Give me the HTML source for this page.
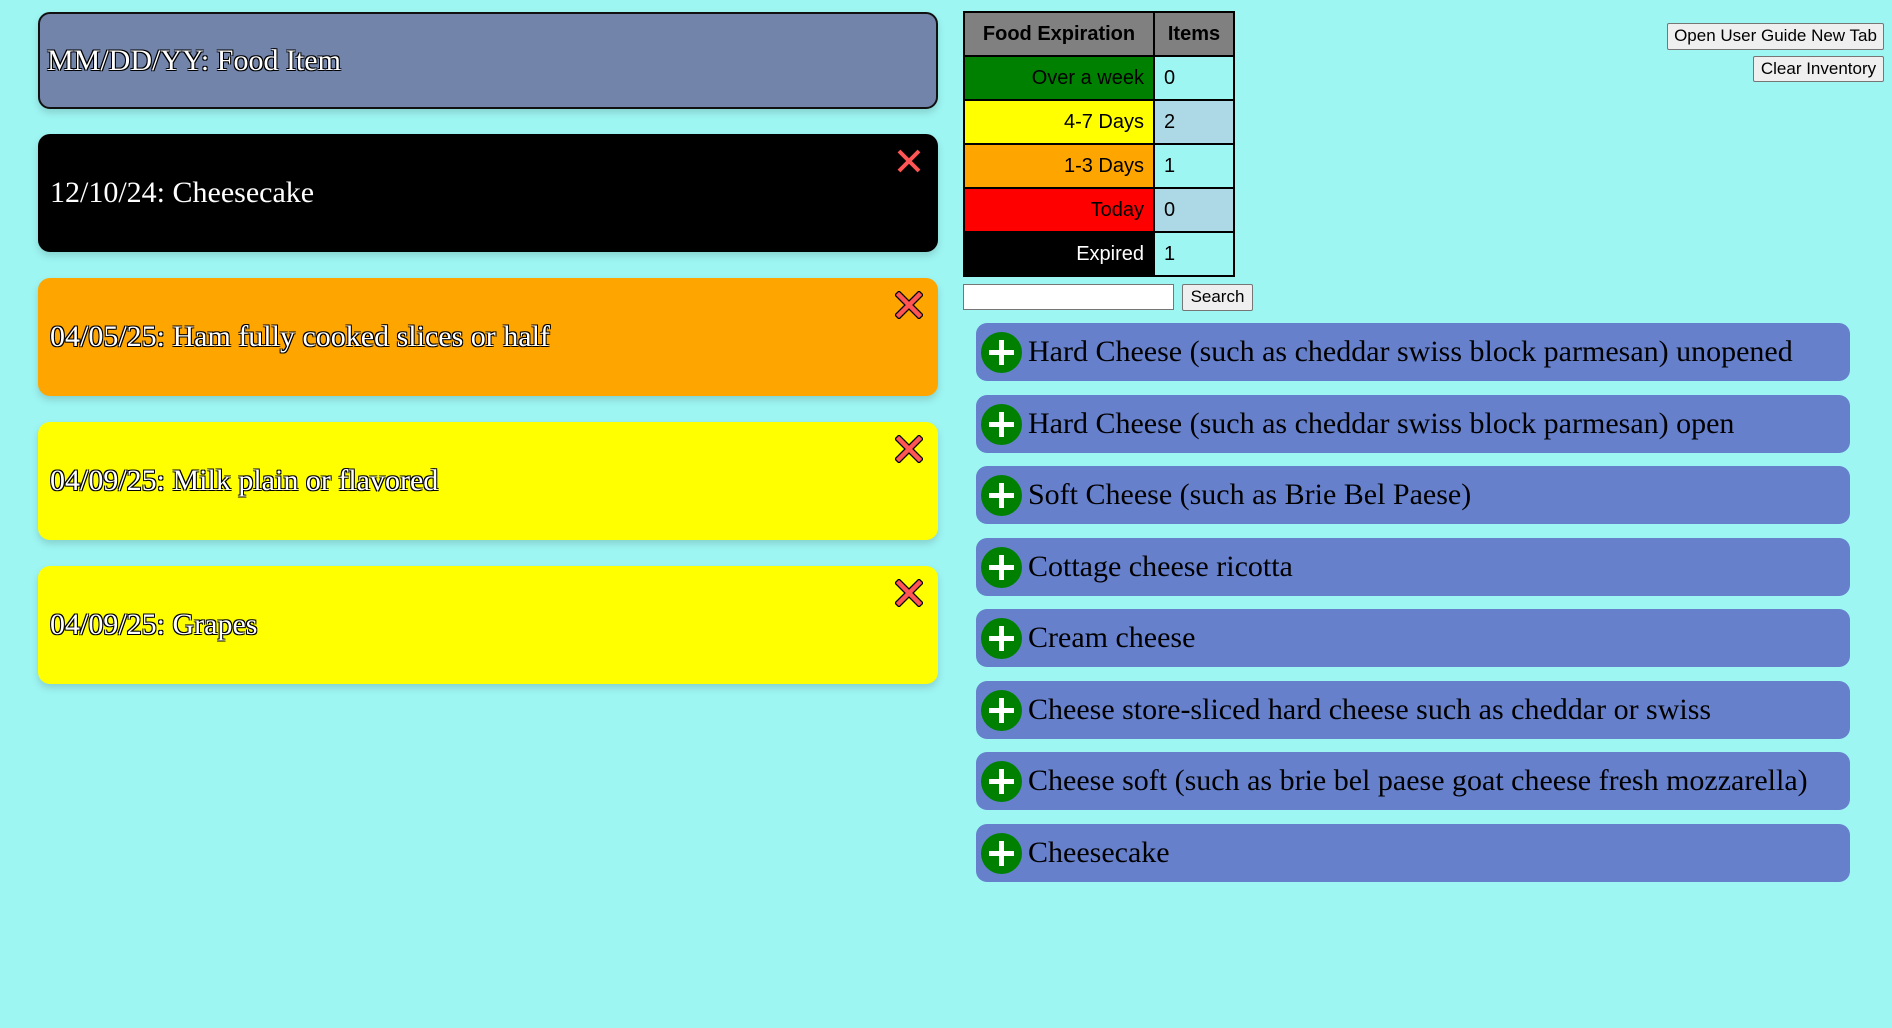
<!DOCTYPE html>
<html><head><meta charset="utf-8"><style>
body{margin:0;width:1892px;height:1028px;background:#9ef6f3;position:relative;overflow:hidden;font-family:"Liberation Serif",serif}
.card{position:absolute;left:38px;width:900px;height:118px;border-radius:12px;box-shadow:0 4px 8px rgba(0,0,0,.15);font-size:30px;color:#fff;display:flex;align-items:center;box-sizing:border-box;padding-left:12px}
.out{text-shadow:-1px -1px 0 #000,1px -1px 0 #000,-1px 1px 0 #000,1px 1px 0 #000}
.x{position:absolute;left:857px;top:13px;width:28px;height:28px}
table{position:absolute;left:963px;top:11px;border-collapse:collapse;font-family:"Liberation Sans",sans-serif;font-size:20px}
td,th{border:2px solid #000;height:42px;padding:0 9px}
th{background:#808080;font-weight:bold}
td.l{text-align:right;width:170px}
td.r{width:60px}
.btn{position:absolute;background:#efefef;border:1px solid #767676;border-radius:2px;font-family:"Liberation Sans",sans-serif;font-size:17px;color:#000;box-sizing:border-box;text-align:center;line-height:24px}
.it{position:absolute;left:976px;width:874px;height:58px;background:#6680cc;border-radius:11px;display:flex;align-items:center;font-size:30px;color:#000}
.pl{width:41px;height:41px;border-radius:50%;background:#008000;margin:0 6px 0 5px;position:relative;flex:none}
.pl:before{content:"";position:absolute;left:8px;top:18px;width:25px;height:5px;background:#fff}
.pl:after{content:"";position:absolute;left:18px;top:8px;width:5px;height:25px;background:#fff}
</style></head><body>
<svg width="0" height="0" style="position:absolute"><defs><g id="xx"><path d="M4 4L24 24M24 4L4 24" stroke="#000" stroke-width="7" stroke-linecap="square"/><path d="M4 4L24 24M24 4L4 24" stroke="#f55" stroke-width="4.5" stroke-linecap="square"/></g></defs></svg>
<div class="card out" style="top:12px;height:97px;background:#7384ab;border:2px solid #111;padding-left:7px">MM/DD/YY: Food Item</div>
<div class="card" style="top:134px;background:#000">12/10/24: Cheesecake<svg class="x" viewBox="0 0 28 28"><path d="M4 4L24 24M24 4L4 24" stroke="#f55" stroke-width="4"/></svg></div>
<div class="card out" style="top:278px;background:#ffa500">04/05/25: Ham fully cooked slices or half<svg class="x" viewBox="0 0 28 28"><use href="#xx"/></svg></div>
<div class="card out" style="top:422px;background:#ff0">04/09/25: Milk plain or flavored<svg class="x" viewBox="0 0 28 28"><use href="#xx"/></svg></div>
<div class="card out" style="top:566px;background:#ff0">04/09/25: Grapes<svg class="x" viewBox="0 0 28 28"><use href="#xx"/></svg></div>
<table>
<tr><th>Food Expiration</th><th>Items</th></tr>
<tr><td class="l" style="background:#008000">Over a week</td><td class="r" style="background:#9ef6f3">0</td></tr>
<tr><td class="l" style="background:#ff0">4-7 Days</td><td class="r" style="background:#add8e6">2</td></tr>
<tr><td class="l" style="background:#ffa500">1-3 Days</td><td class="r" style="background:#9ef6f3">1</td></tr>
<tr><td class="l" style="background:#f00">Today</td><td class="r" style="background:#add8e6">0</td></tr>
<tr><td class="l" style="background:#000;color:#fff">Expired</td><td class="r" style="background:#9ef6f3">1</td></tr>
</table>
<div style="position:absolute;left:963px;top:284px;width:211px;height:26px;background:#fff;border:1px solid #767676;box-sizing:border-box"></div>
<div class="btn" style="left:1182px;top:284px;width:71px;height:27px">Search</div>
<div class="btn" style="left:1667px;top:23px;width:217px;height:27px">Open User Guide New Tab</div>
<div class="btn" style="left:1753px;top:56px;width:131px;height:26px">Clear Inventory</div>
<div class="it" style="top:323px"><div class="pl"></div>Hard Cheese (such as cheddar swiss block parmesan) unopened</div>
<div class="it" style="top:395px"><div class="pl"></div>Hard Cheese (such as cheddar swiss block parmesan) open</div>
<div class="it" style="top:466px"><div class="pl"></div>Soft Cheese (such as Brie Bel Paese)</div>
<div class="it" style="top:538px"><div class="pl"></div>Cottage cheese ricotta</div>
<div class="it" style="top:609px"><div class="pl"></div>Cream cheese</div>
<div class="it" style="top:681px"><div class="pl"></div>Cheese store-sliced hard cheese such as cheddar or swiss</div>
<div class="it" style="top:752px"><div class="pl"></div>Cheese soft (such as brie bel paese goat cheese fresh mozzarella)</div>
<div class="it" style="top:824px"><div class="pl"></div>Cheesecake</div>
</body></html>
